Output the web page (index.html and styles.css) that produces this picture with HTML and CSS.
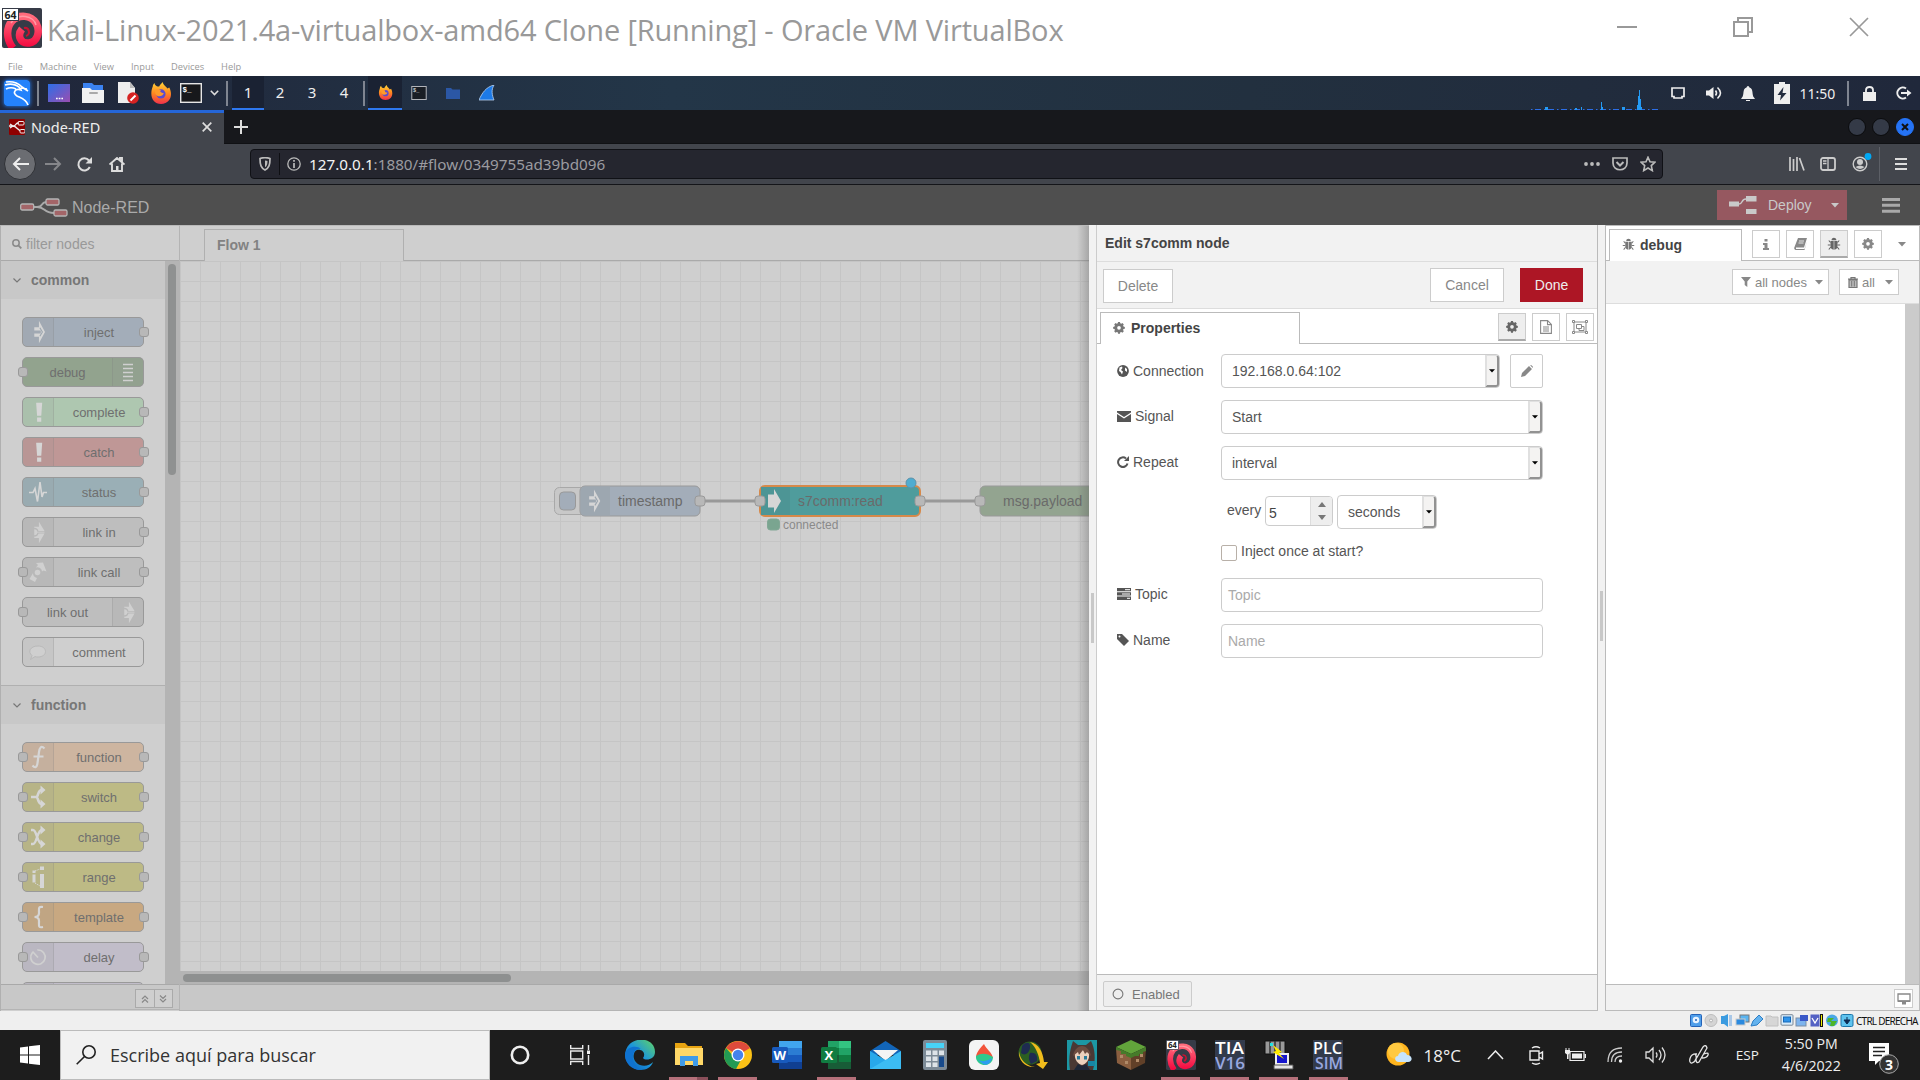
FILE: index.html
```html
<!DOCTYPE html>
<html lang="en">
<head>
<meta charset="utf-8">
<title>Kali-Linux - Oracle VM VirtualBox</title>
<link rel="stylesheet" href="styles.css">
</head>
<body>
<svg width="0" height="0" class="defs">
  <defs>
    <linearGradient id="gRed" x1="0" y1="0" x2="0" y2="1"><stop offset="0" stop-color="#ff6b7c"/><stop offset="1" stop-color="#f3063e"/></linearGradient>
    <linearGradient id="gFox" x1="0" y1="0" x2="0" y2="1"><stop offset="0" stop-color="#ffd43a"/><stop offset=".5" stop-color="#ff8a1f"/><stop offset="1" stop-color="#f0304c"/></linearGradient>
    <linearGradient id="gEdge" x1="0" y1="1" x2="1" y2="0"><stop offset="0" stop-color="#0b58b5"/><stop offset=".5" stop-color="#1a95dd"/><stop offset="1" stop-color="#63d563"/></linearGradient>
    <linearGradient id="gDesk" x1="0" y1="0" x2="1" y2="1"><stop offset="0" stop-color="#2d6fe8"/><stop offset="1" stop-color="#9a4db0"/></linearGradient>
    <symbol id="vbox" viewBox="0 0 40 40"><rect width="40" height="40" rx="2" fill="#363b47"/><path d="M11 40C4 31 4 20 10 13 17 6 29 7 34 15 39 24 35 34 27 35 18 36 15 27 20 21" fill="none" stroke="url(#gRed)" stroke-width="7.500"/><path d="M22 20C27 19 29 26 24 28" fill="none" stroke="#c8102f" stroke-width="2"/><path d="M9 15C16 4 32 8 34 17" fill="none" stroke="#ff9aa5" stroke-width="1.500"/><rect x=".5" y=".5" width="16" height="12" fill="#fff" stroke="#363b47"/><text x="2.500" y="10.500" font-size="10.500" font-weight="bold" font-family="Noto Sans, sans-serif" fill="#222">64</text></symbol>
    <symbol id="firefox" viewBox="0 0 24 24"><path d="M3 5C3 3 4 2 5 1 5 4 8 5 10 5 11 3 12 2 14 0 14 3 17 4 19 7L21 6C25 13 23 24 12 24 3 24-1 15 3 5z" fill="url(#gFox)"/><circle cx="12" cy="13" r="5" fill="#5b4bd0"/><path d="M5 9C8 7 10 8 12 9 10 10 12 12 15 12 14 16 8 17 6 13z" fill="#ff9a2a"/></symbol>
    <symbol id="term" viewBox="0 0 22 20"><rect x=".7" y=".7" width="20.600" height="18.600" fill="#17181b" stroke="#e6e6e6" stroke-width="1.400"/><text x="2.600" y="9" font-size="7.500" font-weight="bold" font-family="Liberation Mono, monospace" fill="#fff">$_</text></symbol>
    <symbol id="gear" viewBox="0 0 14 15"><path fill="currentColor" fill-rule="evenodd" d="M5.800 0h2.400l.4 1.700 1.200.5 1.500-.9 1.700 1.700-.9 1.500.5 1.200 1.700.4v2.400l-1.700.4-.5 1.200.9 1.500-1.700 1.700-1.500-.9-1.200.5-.4 1.700H5.800l-.4-1.700-1.200-.5-1.500.9L1 11.600l.9-1.500-.5-1.200L-.3 8.500V6.100l1.700-.4.5-1.200L1 3l1.700-1.700 1.500.9 1.200-.5zM7 5a2.300 2.300 0 1 0 0 4.600A2.300 2.300 0 0 0 7 5z"/></symbol>
    <symbol id="bug" viewBox="0 0 14 14"><path fill="currentColor" d="M4.500 3.200a2.500 2.500 0 0 1 5 0zM3.500 4H6.700v8.700C4.500 12.500 3.500 11 3.500 9zM7.300 4h3.200v5c0 2-1 3.500-3.200 3.700z"/><path d="M3.500 5.500L1.800 3.500M10.500 5.500l1.700-2M3.500 8H.8M10.500 8h2.700M3.800 10l-2 2.500M10.200 10l2 2.500" stroke="currentColor" stroke-width="1.100"/></symbol>
    <symbol id="inject" viewBox="0 0 20 30"><path d="M6 10h5V3l6.500 12L11 27v-7H6v-3.500h7v-3H6z" fill="#d6d6d6"/><path d="M12 10.500L14.700 15 12 19.500" fill="none" stroke="#9da7b0" stroke-width="1.200"/></symbol>
    <symbol id="link" viewBox="0 0 20 30"><path d="M6 9.500h5V4l6 10h-6.500a4.800 4.800 0 0 0-4.500-3.500zM6 21.500h5V27l6-10.500h-6.500A4.800 4.800 0 0 1 6 20z" fill="#d0d0d0"/><path d="M6 12a3.200 3.200 0 0 1 0 6.500z" fill="#d0d0d0"/><path d="M9 15.200h8" stroke="#d0d0d0"/></symbol>
    <symbol id="bang" viewBox="0 0 20 30"><path d="M8 5h6.500l-1 14H9zM9 21h4.500v4.500H9z" fill="#d6d6d6"/></symbol>
    <symbol id="caret" viewBox="0 0 8 5"><path d="M0 0h8L4 4.500z" fill="currentColor"/></symbol>
  </defs>
</svg>

<header class="titlebar">
  <div class="title-row">
    <svg class="vm-icon" width="40" height="40"><use href="#vbox"/></svg>
    <h1>Kali-Linux-2021.4a-virtualbox-amd64 Clone [Running] - Oracle VM VirtualBox</h1>
    <div class="win-buttons">
      <svg width="20" height="24" viewBox="0 0 20 24"><path d="M0 12h20" stroke="#999" stroke-width="2"/></svg>
      <svg width="20" height="20" viewBox="0 0 20 20"><path d="M1 5h14v14H1zM5 5V1h14v14h-4" fill="none" stroke="#999" stroke-width="2"/></svg>
      <svg width="20" height="20" viewBox="0 0 20 20"><path d="M1 1l18 18M19 1L1 19" stroke="#999" stroke-width="1.700"/></svg>
    </div>
  </div>
  <nav class="menu"><span>File</span><span>Machine</span><span>View</span><span>Input</span><span>Devices</span><span>Help</span></nav>
</header>

<div class="panel">
  <svg class="kali" width="26" height="26" viewBox="0 0 26 26"><rect width="26" height="26" rx="3" fill="#2482fb"/><path d="M1 5C8 3 15 5 17 10 11 8 8 13 13 16 17 18 22 19 24 25M2 2C9 1 15 4 18 7L24 11M2 9C6 7 10 8 12 9M17 8l6 1" fill="none" stroke="#fff" stroke-width="1.700"/></svg>
  <i class="bar"></i>
  <svg width="22" height="18"><rect width="22" height="18" fill="url(#gDesk)"/><path d="M8 14.500h7" stroke="#fff" stroke-width="1.600" stroke-dasharray="1.700 1"/></svg>
  <svg width="22" height="20" viewBox="0 0 22 20"><path d="M1 0h9l2 2h9v6H1z" fill="#3b82f0"/><path d="M0 5h8l2 2h12v13H0z" fill="#f1f1f1"/><rect x="7" y="9" width="9" height="2" rx="1" fill="#aaa"/></svg>
  <svg width="21" height="22" viewBox="0 0 21 22"><path d="M0 0h12l5 6v15H0z" fill="#eee"/><path d="M12 0v6h5z" fill="#bbb"/><circle cx="15" cy="16" r="5.800" fill="#d62222"/><path d="M12.500 18.500l5-5" stroke="#fff" stroke-width="2"/></svg>
  <svg width="22" height="22"><use href="#firefox"/></svg>
  <svg width="22" height="20"><use href="#term"/></svg>
  <svg width="9" height="6" viewBox="0 0 9 6"><path d="M.8.8l3.700 3.700L8.200.8" fill="none" stroke="#ddd" stroke-width="1.600"/></svg>
  <i class="bar"></i>
  <span class="ws on">1</span><span class="ws">2</span><span class="ws">3</span><span class="ws">4</span>
  <i class="bar"></i>
  <span class="ws on"><svg width="15" height="15"><use href="#firefox"/></svg></span>
  <svg width="16" height="14" opacity=".75"><use href="#term"/></svg>
  <svg width="14" height="11" viewBox="0 0 14 11"><path d="M0 0h5l1.500 1.500H14V11H0z" fill="#2b57a5"/></svg>
  <svg width="17" height="16" viewBox="0 0 17 16"><path d="M0 15C3 8 7 2 15 0 12 5 13 10 15 15z" fill="#1c7ae8" stroke="#b9d3f2" stroke-width=".8"/></svg>
  <i></i>
  <svg class="graph" width="128" height="20" viewBox="0 0 128 20"><path d="M0 19.500h128" stroke="#2c6fe8" stroke-dasharray="1.500 2.500 6 3"/><path d="M14 17h3v3h-3zM44 18h2v2h-2zM50 17h1v3h-1zM70 12h1v8h-1zM71 17h1v3h-1zM91 17h3v3h-3zM106 15h1V6h1V0h1v9h1v8h1v3h-5z" fill="#249bf5"/></svg>
  <svg width="14" height="12" viewBox="0 0 14 12"><path d="M1 1h12v8.500H11V11H3V9.500H1z" fill="none" stroke="#eee" stroke-width="1.700"/></svg>
  <svg width="16" height="14" viewBox="0 0 16 14"><path d="M0 4.500h3L7.500 1v12L3 9.500H0z" fill="#eee"/><path d="M9.500 4.500q2 2.500 0 5M11.500 1.500q6 5.500 0 11" fill="none" stroke="#eee" stroke-width="1.600"/></svg>
  <svg width="14" height="15" viewBox="0 0 14 15"><path d="M7 0C8 0 8 1 8.500 1.500 13 3 10.500 9 13 11.500L14 13H0l1-1.500C3.500 9 1 3 5.500 1.500 6 1 6 0 7 0zM5 14h4v1H5z" fill="#eee"/></svg>
  <svg width="16" height="22" viewBox="0 0 16 22"><path d="M5 0h6v2h5v20H0V2h5z" fill="#eee"/><path d="M9.500 5L3.500 13H7l-1 5.500L12.500 11H8.500z" fill="#222b3e"/></svg>
  <span class="clock">11:50</span>
  <i class="bar"></i>
  <svg class="lock" width="13" height="15" viewBox="0 0 13 15"><path d="M0 6h13v9H0z" fill="#eee"/><path d="M3 7V4q0-3 3.500-3T10 4v3" fill="none" stroke="#eee" stroke-width="1.800"/></svg>
  <svg class="logout" width="16" height="14" viewBox="0 0 16 14"><path d="M10 2.500A5.500 5.500 0 1 0 10 11.500" fill="none" stroke="#eee" stroke-width="2"/><path d="M5 6h6V3.500L15.500 7 11 10.500V8H5z" fill="#eee"/></svg>
</div>

<div class="tabs">
  <div class="tab">
    <svg width="16" height="16" viewBox="0 0 16 16"><rect width="16" height="16" rx="1" fill="#8f0000"/><path d="M0 7h4C8 7 6 4 9 4h1M4 7c4 0 4 5 10 5.500M1 5l3 2-3 2" fill="none" stroke="#eee" stroke-width="1.300"/><rect x="9" y="2.500" width="6" height="3.500" rx="1" fill="none" stroke="#eee"/><rect x="11" y="10.500" width="5" height="3.500" rx="1" fill="#8f0000" stroke="#eee"/></svg>
    <span class="tab-title">Node-RED</span>
    <svg width="10" height="10" viewBox="0 0 10 10"><path d="M.7.700l8.600 8.600M9.300.700L.7 9.300" stroke="#ddd" stroke-width="1.700"/></svg>
  </div>
  <svg class="plus" width="14" height="14" viewBox="0 0 14 14"><path d="M7 0v14M0 7h14" stroke="#ddd" stroke-width="2"/></svg>
  <div class="dots"><i></i><i></i><i class="x"><svg width="8" height="8" viewBox="0 0 8 8"><path d="M1 1l6 6M7 1L1 7" stroke="#111" stroke-width="2"/></svg></i></div>
</div>

<div class="nav">
  <span class="back"><svg width="17" height="14" viewBox="0 0 17 14"><path d="M8 1L2 7l6 6M2 7h15" fill="none" stroke="#eee" stroke-width="2"/></svg></span>
  <svg width="17" height="14" viewBox="0 0 17 14"><path d="M9 1l6 6-6 6M15 7H0" fill="none" stroke="#85868a" stroke-width="2"/></svg>
  <svg class="reload" width="16" height="15" viewBox="0 0 16 15"><path d="M12.800 10A6 6 0 1 1 12 3.500" fill="none" stroke="#ddd" stroke-width="2"/><path d="M15 0v6.500H8.500z" fill="#ddd"/></svg>
  <svg class="home" width="16" height="15" viewBox="0 0 16 15"><path d="M.5 7.500L8 1l7.500 6.500M3 6.500V14h10V6.500M11 3V.5h2V5" fill="none" stroke="#ddd" stroke-width="1.900"/><path d="M7 9h2.500v5H7z" fill="#ddd"/></svg>
  <div class="url">
    <svg width="12" height="14" viewBox="0 0 12 14"><path d="M1 1.500Q6-.2 11 1.500C11 8 10 11 6 13 2 11 1 8 1 1.500z" fill="none" stroke="#bbb" stroke-width="1.700"/><path d="M6 3.500Q8 3.500 8.500 4C8.500 7 8 9 6 10.300z" fill="#bbb"/></svg>
    <i></i>
    <svg width="14" height="14" viewBox="0 0 14 14"><circle cx="7" cy="7" r="6.200" fill="none" stroke="#bbb" stroke-width="1.300"/><path d="M7 6v5M7 3v1.700" stroke="#bbb" stroke-width="1.700"/></svg>
    <span><b>127.0.0.1</b>:1880/#flow/0349755ad39bd096</span>
    <svg width="16" height="4" viewBox="0 0 16 4"><circle cx="2" cy="2" r="1.900" fill="#bbb"/><circle cx="8" cy="2" r="1.900" fill="#bbb"/><circle cx="14" cy="2" r="1.900" fill="#bbb"/></svg>
    <svg width="16" height="14" viewBox="0 0 16 14"><path d="M1 1h14v5c0 9-14 9-14 0z" fill="none" stroke="#bbb" stroke-width="1.700"/><path d="M4.500 5L8 8.500 11.500 5" fill="none" stroke="#bbb" stroke-width="2"/></svg>
    <svg width="16" height="16" viewBox="0 0 16 16"><path d="M8 1.200l2 4.500 5 .500-3.700 3.400 1 5L8 12l-4.300 2.600 1-5L1 6.200l5-.5z" fill="none" stroke="#bbb" stroke-width="1.600"/></svg>
  </div>
  <svg width="16" height="14" viewBox="0 0 16 14"><path d="M1 0v14M4.500 2v12M8 0v14M10.500 1L15 13.500" stroke="#ccc" stroke-width="1.700"/></svg>
  <svg class="panes" width="16" height="14" viewBox="0 0 16 14"><rect x="1" y="1" width="14" height="12" rx="2" fill="none" stroke="#ccc" stroke-width="1.800"/><path d="M8 1v12M3 4h3.500M3 6.500h3.500" stroke="#ccc" stroke-width="1.300"/></svg>
  <svg class="acct" width="20" height="20" viewBox="0 0 20 20"><circle cx="8" cy="12" r="6.800" fill="none" stroke="#ccc" stroke-width="1.400"/><circle cx="8" cy="10" r="3" fill="#ccc"/><path d="M3.500 15Q8 12 12.500 15 8 19 3.500 15z" fill="#ccc"/><circle cx="16" cy="4.500" r="3.400" fill="#00a8f5"/></svg>
  <i class="nav-sep"></i>
  <svg width="12" height="12" viewBox="0 0 12 12"><path d="M0 1h12M0 6h12M0 11h12" stroke="#ddd" stroke-width="2"/></svg>
</div>

<div class="nr-header">
  <svg class="logo" width="48" height="20" viewBox="0 0 48 20"><path d="M14 9h3C24 9 20 4 27 4M17 9c9 0 6 6 17 6" fill="none" stroke="#aaa" stroke-width="1.800"/><g fill="#a36568" stroke="#b5b5b5" stroke-width="1.300"><rect x=".7" y="6" width="13" height="6" rx="1.500"/><rect x="26" y="1" width="13" height="6" rx="1.500"/><rect x="34" y="12" width="13" height="6" rx="1.500"/></g></svg>
  <span class="brand">Node-RED</span>
  <div class="deploy">
    <svg width="28" height="20" viewBox="0 0 28 20"><path d="M0 6.500h10v5H0zM17 1h10.500v5.500H17zM17 14h10.500v5H17z" fill="#c9c9c9"/><path d="M10 9C14 9 12 4 17 4" fill="none" stroke="#c9c9c9" stroke-width="1.500"/></svg>
    <span>Deploy</span>
    <svg width="8" height="5"><use href="#caret"/></svg>
  </div>
  <svg width="18" height="15" viewBox="0 0 18 15"><path d="M0 1.500h18M0 7.300h18M0 13.200h18" stroke="#a9a9a9" stroke-width="2.900"/></svg>
</div>

<main class="editor">
  <aside class="palette">
    <div class="search"><svg width="10" height="10" viewBox="0 0 10 10"><circle cx="4" cy="4" r="3.200" fill="none" stroke="#8a8a8a" stroke-width="1.500"/><path d="M6.300 6.300L9.300 9.300" stroke="#8a8a8a" stroke-width="1.800"/></svg><span>filter nodes</span></div>
    <div class="palette-body">
      <div class="palette-list">
        <h2><svg width="8" height="5" viewBox="0 0 8 5"><path d="M.5.5L4 4 7.500.5" fill="none" stroke="#777" stroke-width="1.200"/></svg><span>common</span></h2>
        <ul>
          <li class="node c-inject out"><span class="ico"><svg width="20" height="28"><use href="#inject"/></svg></span><b>inject</b></li>
          <li class="node c-debug in rev"><b>debug</b><span class="ico"><svg width="20" height="28" viewBox="0 0 20 28"><path d="M5 6.500h10M5 10.500h10M5 14.500h10M5 18.500h10M5 22.500h10" stroke="#d0d0d0" stroke-width="1.600"/></svg></span></li>
          <li class="node c-complete out"><span class="ico"><svg width="20" height="28"><use href="#bang"/></svg></span><b>complete</b></li>
          <li class="node c-catch out"><span class="ico"><svg width="20" height="28"><use href="#bang"/></svg></span><b>catch</b></li>
          <li class="node c-status out"><span class="ico"><svg width="20" height="28" viewBox="0 0 20 28"><path d="M1 14.500h4l2-4 2.500 13L12 4l2 15 1.500-4.500H19" fill="none" stroke="#d6d6d6" stroke-width="1.600"/></svg></span><b>status</b></li>
          <li class="node c-link out"><span class="ico"><svg width="20" height="28"><use href="#link"/></svg></span><b>link in</b></li>
          <li class="node c-link in out"><span class="ico"><svg width="20" height="28" viewBox="0 0 20 28"><path d="M8 5l7-.5 3.500 9-3-1-1.500 1A4.500 4.500 0 0 0 8 9.500L10 7zM5 15a5 5 0 0 0 4 5L7 24l-5.500-3z" fill="#d0d0d0"/><circle cx="9.500" cy="14.500" r="2.800" fill="#d0d0d0"/></svg></span><b>link call</b></li>
          <li class="node c-link in rev"><b>link out</b><span class="ico"><svg width="20" height="28"><use href="#link"/></svg></span></li>
          <li class="node c-comment"><span class="ico"><svg width="20" height="28" viewBox="0 0 20 28"><path d="M10 8c10 0 10 11 0 11-1 0-2 0-3-.4L2.500 21.500 4 17.500C-.5 14 2 8 10 8z" fill="#cfcfcf" stroke="#b9b9b9"/></svg></span><b>comment</b></li>
        </ul>
        <h2 class="second"><svg width="8" height="5" viewBox="0 0 8 5"><path d="M.5.5L4 4 7.500.5" fill="none" stroke="#777" stroke-width="1.200"/></svg><span>function</span></h2>
        <ul>
          <li class="node c-function in out"><span class="ico"><svg width="20" height="28" viewBox="0 0 20 28"><path d="M16.500 5.500C13 2 11.500 5 11 9L9.500 20C9 24.500 7 25.500 4.500 22.500M5.500 13.500h10" fill="none" stroke="#d6d6d6" stroke-width="2.200"/></svg></span><b>function</b></li>
          <li class="node c-switch in out"><span class="ico"><svg width="20" height="28" viewBox="0 0 20 28"><path d="M3 14h5C11 14 9 7 14 7M8 14c3 0 1 7 6 7" fill="none" stroke="#d6d6d6" stroke-width="2.600"/><path d="M12.500 2.500L17.500 7l-5 4.500zM12.500 16.500L17.500 21l-5 4.500z" fill="#d6d6d6"/></svg></span><b>switch</b></li>
          <li class="node c-switch in out"><span class="ico"><svg width="20" height="28" viewBox="0 0 20 28"><path d="M3 7h2C9 7 9 21 14 21M3 21h2C9 21 9 7 14 7" fill="none" stroke="#d6d6d6" stroke-width="2.400"/><path d="M12.500 2.500L17.500 7l-5 4.500zM12.500 16.500L17.500 21l-5 4.500z" fill="#d6d6d6"/></svg></span><b>change</b></li>
          <li class="node c-switch in out"><span class="ico"><svg width="20" height="28" viewBox="0 0 20 28"><path d="M4.500 7.500h3v2.500h-3zM4.500 11.500h3v8h-3zM12 3.500h4V7h-4zM12 11h4v14h-4z" fill="#d6d6d6"/><path d="M7 8l5-2M7 20l5 3" stroke="#d6d6d6" stroke-dasharray="1.500 1"/></svg></span><b>range</b></li>
          <li class="node c-template in out"><span class="ico"><svg width="20" height="28" viewBox="0 0 20 28"><path d="M15 4C10 3.500 11 5 11 10 11 13 9.500 14 6.500 14 9.500 14 11 15 11 18 11 23 10 25 15 24" fill="none" stroke="#d6d6d6" stroke-width="2.200"/></svg></span><b>template</b></li>
          <li class="node c-delay in out"><span class="ico"><svg width="20" height="28" viewBox="0 0 20 28"><path d="M10 7.500V7a7.200 7.200 0 1 1-5.500 2.500M4.500 8.500L10 14.500" fill="none" stroke="#d0d0d0" stroke-width="1.700"/></svg></span><b>delay</b></li>
          <li class="node c-delay in out"><span class="ico"></span><b></b></li>
        </ul>
      </div>
      <div class="vscroll"><i></i></div>
    </div>
    <footer><div class="pair"><span><svg width="8" height="8" viewBox="0 0 8 8"><path d="M1 4l3-3 3 3M1 7.500l3-3 3 3" fill="none" stroke="#888" stroke-width="1.200"/></svg></span><span><svg width="8" height="8" viewBox="0 0 8 8"><path d="M1 .5l3 3 3-3M1 4l3 3 3-3" fill="none" stroke="#888" stroke-width="1.200"/></svg></span></div></footer>
  </aside>

  <section class="workspace">
    <div class="ws-tabs"><div class="flow-tab">Flow 1</div></div>
    <svg class="canvas" width="909" height="710" viewBox="180 261 909 710">
      <defs><pattern id="grid" x="180" y="261" width="20" height="20" patternUnits="userSpaceOnUse"><path d="M.5 0v20M0 .5h20" stroke="#c5c5c5"/></pattern></defs>
      <rect x="180" y="261" width="909" height="710" fill="url(#grid)"/>
      <g stroke="#999" stroke-width="3"><path d="M700 501h60M920 501h60"/></g>
      <g stroke="#a8a8a8"><rect x="554.500" y="487.500" width="40" height="27" rx="5" fill="#c8c8c8"/><rect x="559.500" y="492" width="16" height="18" rx="4" fill="#a3adb9" stroke="#999"/></g>
      <rect x="580" y="486" width="120" height="30" rx="5" fill="#a3adb9" stroke="#999"/>
      <path d="M580.500 491q0-4.500 4.500-4.500H610v29h-25Q580.500 515.500 580.500 511z" fill="#9da7b0"/>
      <use href="#inject" x="583" y="486.500" width="20" height="29"/>
      <rect x="760" y="486" width="160" height="30" rx="5" fill="#4f9c9c" stroke="#d6894a" stroke-width="2"/>
      <path d="M761 487h29v28h-29z" fill="#4d9595"/>
      <path d="M768 494.500h6V489l7 12-7 12v-5.500h-6z" fill="#d6d6d6"/>
      <rect x="980" y="486" width="130" height="30" rx="5" fill="#93a490" stroke="#999"/>
      <g fill="#b8b8b8" stroke="#999"><rect x="695" y="496" width="10" height="10" rx="3"/><rect x="755" y="496" width="10" height="10" rx="3"/><rect x="915" y="496" width="10" height="10" rx="3"/><rect x="975" y="496" width="10" height="10" rx="3"/></g>
      <circle cx="911" cy="483" r="5" fill="#4facd0" stroke="#5f92a8"/>
      <rect x="767.500" y="519" width="12" height="11" rx="3" fill="#7aa590" stroke="#82a896"/>
      <g class="labels"><text x="618" y="505.500">timestamp</text><text x="798" y="505.500">s7comm:read</text><text x="1003" y="505.500">msg.payload</text><text class="small" x="783" y="529">connected</text></g>
    </svg>
    <div class="hscroll"><i></i></div>
    <div class="ws-foot"></div>
  </section>

  <section class="tray">
    <div class="grip"><i></i></div>
    <div class="tray-main">
      <h3>Edit s7comm node</h3>
      <div class="tray-tools"><button class="del">Delete</button><button class="cancel">Cancel</button><button class="done">Done</button></div>
      <div class="tray-tabs">
        <div class="prop-tab"><svg width="12" height="12"><use href="#gear"/></svg><span>Properties</span></div>
        <span class="sq on"><svg width="12" height="12"><use href="#gear"/></svg></span>
        <span class="sq"><svg width="12" height="14" viewBox="0 0 12 14"><path d="M.6.6h7l3.800 3.800v9H.600zM7.500.6v4h4M3 7h6M3 9h6M3 11h6" fill="none" stroke="#888" stroke-width="1.100"/></svg></span>
        <span class="sq"><svg width="16" height="14" viewBox="0 0 16 14"><path d="M2 2h12v10H2zM4.500 4.500h5v4h-5zM9.500 6.500H12v4H7V8.500" fill="none" stroke="#888"/><path d="M.5.5h2v2h-2zM13.500.5h2v2h-2zM.5 11.500h2v2h-2zM13.500 11.500h2v2h-2z" fill="#fff" stroke="#888"/></svg></span>
      </div>
      <form class="form">
        <div class="row"><label class="low"><svg width="12" height="12" viewBox="0 0 12 12"><circle cx="6" cy="6" r="5.900" fill="#555"/><path d="M2.500 2.500L5 1.500l.5 1.500-1.500 2 2 1.500-1 3-1.500-2.500L2 6zM8 2.500l2 1.500v3L8 5.500z" fill="#fff"/></svg><span>Connection</span></label><div class="select w279">192.168.0.64:102<i><svg width="6" height="4"><use href="#caret"/></svg></i></div><span class="edit"><svg width="12" height="12" viewBox="0 0 12 12"><path d="M0 12l1-4L8 1l3 3-7 7zM9 .3h1.500l1.300 1.300V3z" fill="#888"/></svg></span></div>
        <div class="row"><label><svg width="14" height="11" viewBox="0 0 14 11"><path d="M0 0h14v1.500L7 6 0 1.500zM0 3l7 4.500L14 3v8H0z" fill="#555"/></svg><span>Signal</span></label><div class="select w322">Start<i><svg width="6" height="4"><use href="#caret"/></svg></i></div></div>
        <div class="row"><label><svg width="12" height="12" viewBox="0 0 12 12"><path d="M10.500 7.500A4.800 4.800 0 1 1 9 2.500" fill="none" stroke="#555" stroke-width="2"/><path d="M12 0v5H7z" fill="#555"/></svg><span>Repeat</span></label><div class="select w322">interval<i><svg width="6" height="4"><use href="#caret"/></svg></i></div></div>
        <div class="row every"><span>every</span><div class="spin"><span>5</span><i><svg width="8" height="5" viewBox="0 0 8 5"><path d="M0 5h8L4 0z" fill="#777"/></svg><svg width="8" height="5" viewBox="0 0 8 5"><path d="M0 0h8L4 5z" fill="#777"/></svg></i></div><div class="select w100">seconds<i><svg width="6" height="4"><use href="#caret"/></svg></i></div></div>
        <div class="row once"><span class="check"></span><span>Inject once at start?</span></div>
        <div class="row"><label><svg width="14" height="12" viewBox="0 0 14 12"><path d="M0 0h14v3.300H0zM0 4.300h14v3.300H0zM0 8.600h14V12H0z" fill="#555"/><path d="M8 1.700h5M5 6h8M10 10.300h3" stroke="#fff"/></svg><span>Topic</span></label><div class="text">Topic</div></div>
        <div class="row"><label><svg width="12" height="12" viewBox="0 0 12 12"><path d="M0 0h5l7 7-5 5-7-7z" fill="#555"/><circle cx="2.500" cy="2.500" r="1" fill="#fff"/></svg><span>Name</span></label><div class="text">Name</div></div>
      </form>
      <footer><span class="enabled"><svg width="12" height="12" viewBox="0 0 12 12"><circle cx="6" cy="6" r="4.900" fill="none" stroke="#777" stroke-width="1.100"/></svg><span>Enabled</span></span></footer>
    </div>
  </section>

  <div class="sep"><i></i></div>

  <aside class="sidebar">
    <div class="side-tabs">
      <div class="debug-tab"><svg width="13" height="13"><use href="#bug"/></svg><span>debug</span></div>
      <span class="sq"><svg width="6" height="11" viewBox="0 0 6 11"><path d="M1.500 0h3v2.500h-3zM0 4h4.500v5H6v2H0V9h1.500V6H0z" fill="#888"/></svg></span>
      <span class="sq"><svg width="13" height="12" viewBox="0 0 13 12"><path d="M4 0h9l-3 9.500H2V11h8.500l2.500-8-2.500 9H1.500Q-.5 11 .5 9z" fill="#888"/><path d="M5 3h5M4.500 5h5" stroke="#fff" stroke-width=".8"/></svg></span>
      <span class="sq on"><svg width="14" height="14"><use href="#bug"/></svg></span>
      <span class="sq"><svg width="12" height="12"><use href="#gear"/></svg></span>
      <svg class="more" width="8" height="5"><use href="#caret"/></svg>
    </div>
    <div class="side-tools">
      <span class="btn all-nodes"><svg width="10" height="10" viewBox="0 0 10 10"><path d="M0 0h10L6.300 4.500V10L3.700 8V4.500z" fill="#888"/></svg><span>all nodes</span><svg width="8" height="5"><use href="#caret"/></svg></span>
      <span class="btn"><svg width="10" height="11" viewBox="0 0 10 11"><path d="M3 1.500V.5h4v1M0 2h10M1 3h8v7.500H1z" fill="#bbb" stroke="#777" stroke-width="1.200"/><path d="M3.700 4v5.500M6.300 4v5.500" stroke="#777"/></svg><span>all</span><svg width="8" height="5"><use href="#caret"/></svg></span>
    </div>
    <div class="side-body"></div>
    <footer><span><svg width="14" height="12" viewBox="0 0 14 12"><path d="M1 1h12v7H1z" fill="none" stroke="#888" stroke-width="1.300"/><path d="M1 7.500h12V9H1zM5 9h4v2.500H5z" fill="#888"/></svg></span></footer>
  </aside>
</main>

<div class="vbstatus">
  <svg width="164" height="13" viewBox="0 0 164 13">
    <rect x=".5" y=".5" width="11" height="12" rx="1" fill="#4f9eea" stroke="#2463b8"/><circle cx="6" cy="6" r="3.300" fill="#e8f3ff"/><circle cx="6" cy="6" r="1" fill="#2463b8"/>
    <circle cx="21" cy="6.500" r="6" fill="#d4d4d4" stroke="#bcbcbc"/><circle cx="21" cy="6.500" r="1.500" fill="#f5f5f5" stroke="#b0b0b0"/>
    <path d="M31 2h3l4-2v13l-4-3h-3z" fill="#3b9be0"/><path d="M39 1h3v11h-3z" fill="#a9c8e8"/>
    <rect x="50" y="1" width="9" height="7" fill="#5ab4f0" stroke="#777"/><rect x="46" y="5" width="9" height="6" fill="#2a8ae0" stroke="#ccc"/>
    <path d="M61 12l2-5 6-6 4 4-6 6z" fill="#63b2ee" stroke="#2f7fc4"/>
    <path d="M76 2h5l1 1h6v9H76z" fill="#d6d6d6" stroke="#c0c0c0"/>
    <rect x="91" y=".7" width="12" height="10.500" rx="1" fill="#d8ecfb" stroke="#7b8794"/><rect x="93.500" y="3" width="7" height="5" fill="#2f94ea" stroke="#1668b8"/>
    <rect x="106" y="4" width="10" height="8" fill="#7db4ee" stroke="#7a8ea5"/><rect x="110" y="1" width="8" height="6" fill="#3a58c8"/>
    <rect x="120.500" y=".5" width="9" height="12" fill="#5361c4"/><path d="M122 4l3 5 3-5" stroke="#fff" stroke-width="1.300" fill="none"/><rect x="130.500" y=".5" width="2" height="12" fill="#ee0" stroke="#111"/>
    <circle cx="142" cy="6.500" r="6" fill="#4aa7e6"/><path d="M138 4h6l-3 3h6l-3 5h-4l1-4h-4z" fill="#4cb52a"/>
    <rect x="151" y=".5" width="12" height="12" rx="1.500" fill="#5fc3ee" stroke="#1b75aa"/><path d="M157 3v5M154 6l3 4 3-4z" fill="#0d2b52" stroke="#0d2b52"/>
  </svg>
  <span>CTRL DERECHA</span>
</div>

<div class="taskbar">
  <span><svg width="20" height="20" viewBox="0 0 20 20"><path d="M0 2.500L8 1.500V9.500H0zM9 1.300L20 0v9.500H9zM0 10.500h8v8L0 17.500zM9 10.500h11V20L9 18.700z" fill="#fff"/></svg></span>
  <div class="find"><svg width="20" height="20" viewBox="0 0 20 20"><circle cx="13" cy="7" r="6.200" fill="none" stroke="#222" stroke-width="1.600"/><path d="M8.500 11.500L.7 19.300" stroke="#222" stroke-width="1.600"/></svg><span>Escribe aquí para buscar</span></div>
  <span><svg width="20" height="20"><circle cx="10" cy="10" r="8.200" fill="none" stroke="#eee" stroke-width="2.600"/></svg></span>
  <span><svg width="20" height="20" viewBox="0 0 20 20"><path d="M.7 0v3.500h12V0M.7 6h12v8H.7zM.7 20v-3.500h12V20M18.500 0v5M18.500 10v10" fill="none" stroke="#e8e8e8" stroke-width="1.400"/><path d="M17 5.500h3v3.500h-3z" fill="#eee"/></svg></span>
  <div class="apps">
    <span><svg width="30" height="30" viewBox="0 0 30 30"><path d="M0 15C1-5 30-5 30 12 30 20 20 21 18 18 21 14 18 9 12 10 8 11 6 21 15 25 20 27 25 25 28 22 25 31 13 32 7 27 2 23 0 20 0 15z" fill="url(#gEdge)"/><path d="M0 14C2 6 12 5 16 9 11 8 7 13 8 20 9 25 14 29 16 30 6 30 0 23 0 14z" fill="#0f72d0"/></svg></span>
    <span class="run multi"><svg width="28" height="24" viewBox="0 0 28 24"><path d="M0 0h10l3 3h14v8H0z" fill="#e8a411"/><path d="M0 5h28v17H0z" fill="#ffd868"/><path d="M5 23V13h18v10h-5v-5h-8v5z" fill="#3f9be8"/></svg></span>
    <span class="run"><svg width="28" height="28" viewBox="0 0 28 28"><circle cx="14" cy="14" r="14" fill="#fbc116"/><path d="M14 14L2 7A14 14 0 0 1 26 7z" fill="#dd4b3c"/><path d="M2 7A14 14 0 0 0 12 28l6-11-8-1z" fill="#229a54"/><circle cx="14" cy="14" r="6.500" fill="#fff"/><circle cx="14" cy="14" r="5.200" fill="#4583ec"/></svg></span>
    <span><svg width="30" height="28" viewBox="0 0 30 28"><path d="M7 0h23v7H7z" fill="#41a5ee"/><path d="M7 7h23v7H7z" fill="#2b7cd3"/><path d="M7 14h23v7H7z" fill="#185abd"/><path d="M7 21h23v7H7z" fill="#103f91"/><rect y="6" width="16" height="16" rx="1.500" fill="#185abd"/><text x="1.500" y="18.500" class="ofc">W</text></svg></span>
    <span class="run"><svg width="30" height="28" viewBox="0 0 30 28"><path d="M7 0h23v28H7z" fill="#21a366"/><path d="M18 0h12v7H18z" fill="#33c481"/><path d="M7 7h11v7H7z" fill="#107c41"/><path d="M7 14h23v14H7z" fill="#185c37"/><path d="M18 14h12v7H18z" fill="#107c41"/><rect y="6" width="16" height="16" rx="1.500" fill="#107c41"/><text x="3.500" y="18.500" class="ofc">X</text></svg></span>
    <span><svg width="31" height="28" viewBox="0 0 31 28"><path d="M0 10L15.500 0 31 10v4H0z" fill="#1265b8"/><path d="M3 9h25L15.500 20z" fill="#f4f4f4"/><path d="M0 10l31 18H0z" fill="#28a8ea"/><path d="M31 10v18H0z" fill="#3cbcf3"/></svg></span>
    <span><svg width="24" height="30" viewBox="0 0 24 30"><rect width="24" height="30" rx="2" fill="#7c8a96"/><path d="M3 3h18v5H3z" fill="#47d2f7"/><path d="M3 10.500h5V15H3zM9.500 10.500h5V15h-5zM16 10.500h5V15h-5zM3 16.500h5V21H3zM9.500 16.500h5V21h-5zM3 22.500h5V27H3zM9.500 22.500h5V27h-5z" fill="#dde3e8"/><path d="M16 16.500h5V27h-5z" fill="#174a8c"/></svg></span>
    <span><svg width="30" height="30" viewBox="0 0 30 30"><rect width="30" height="30" rx="6" fill="#f4f4f4"/><path d="M15 4C8 11 7 15 7 18h17C23 12 17 9 15 4z" fill="#f2543b"/><path d="M7 16q8-5 17 1c0 10-15 11-17 1z" fill="#2ec98c"/><path d="M9 20q7 3 14-2-3 9-9 6z" fill="#2d9df0"/></svg></span>
    <span><svg width="30" height="29" viewBox="0 0 30 29"><circle cx="12" cy="12" r="11.500" fill="#2b5f22"/><path d="M4 5c4-5 9-4 8 2s-6 8-9 5zM12 12c5-1 8 2 7 8l-6 3c-2-3-3-7-1-11z" fill="#1e2b50"/><path d="M12 1c9 2 13 10 14 20h4l-5 7-7-5 4-1C21 14 18 6 12 1zM1 10c1 9 7 15 16 16C7 27 0 19 1 10z" fill="#f0bc1c"/></svg></span>
    <span><svg width="30" height="30" viewBox="0 0 30 30"><rect width="30" height="30" fill="#1c97a4"/><path d="M3 30C1 16 4 7 6 1l5 4h8l5-4c4 8 5 18 2 29z" fill="#4b3834"/><path d="M8 13q7-6 14 0c1 7-3 11-7 12-4-1-8-5-7-12z" fill="#ecd0bd"/><path d="M6 16c1-7 6-10 9-10s8 3 9 10l-4-4-2 2-2-4-4 5-1-3z" fill="#6d4c40"/><path d="M10 16h3v3.500h-3zM17 16h3v3.500h-3z" fill="#287b9a"/><path d="M7 30l4-6 4 2 4-2 4 6z" fill="#1e2638"/><path d="M21 21h7v5h-7z" fill="#1686a5"/></svg></span>
    <span><svg width="30" height="30" viewBox="0 0 30 30"><path d="M0 8l15 7v15L1 23z" fill="#8b5f40"/><path d="M30 8l-15 7v15l14-7z" fill="#614028"/><path d="M15 0l15 7-15 7L0 7z" fill="#62a43b"/><path d="M0 7l15 7 15-7v4l-3 1v2h-4v2h-4l-4 2-5-2v-2H5v-3l-5-1z" fill="#467b2a"/><path d="M4 15h3v3H4zM9 21h3v3H9zM20 19h3v3h-3zM24 14h3v3h-3z" fill="#b08a68"/></svg></span>
    <span class="run"><svg width="30" height="30"><use href="#vbox"/></svg></span>
    <span class="run"><svg width="30" height="30" viewBox="0 0 30 30"><rect width="30" height="30" fill="#333b4c"/><text x="0" y="14" textLength="29" lengthAdjust="spacingAndGlyphs" class="tia">TIA</text><text x="0" y="29" textLength="30" lengthAdjust="spacingAndGlyphs" class="tia blue">V16</text></svg></span>
    <span class="run"><svg width="30" height="30" viewBox="0 0 30 30"><path d="M1 1h20v13H1z" fill="#999" stroke="#111"/><path d="M6 1v13M11 1v13M16 1v13" stroke="#333" stroke-width="1.500"/><path d="M6 3h3v3H6z" fill="#25e0e0"/><path d="M12 14h12v10H12z" fill="#1616cc" stroke="#eee" stroke-width="2"/><path d="M10 25h19v4H10z" fill="#e6e6e6" stroke="#555"/><path d="M9 5l9 7-3 1 5 6-11-7 3-1z" fill="#ffea00"/></svg></span>
    <span class="run"><svg width="30" height="30" viewBox="0 0 30 30"><rect width="30" height="30" fill="#333b4c"/><text x="0" y="14" textLength="29" lengthAdjust="spacingAndGlyphs" class="tia">PLC</text><text x="2" y="29" textLength="28" lengthAdjust="spacingAndGlyphs" class="tia blue">SIM</text></svg></span>
  </div>
  <div class="trayicons">
    <svg width="26" height="26" viewBox="0 0 26 26"><circle cx="12" cy="12" r="11.500" fill="#ffb51f"/><circle cx="10" cy="9" r="8" fill="#ffc940"/><path d="M13 20c-5 0-5-6-1-6 1-5 8-5 9-1 6 0 6 7 1 7z" fill="#c7e4fb"/></svg>
    <span class="temp">18°C</span>
    <svg width="17" height="10" viewBox="0 0 17 10"><path d="M1 9l7.500-8L16 9" fill="none" stroke="#eee" stroke-width="1.500"/></svg>
    <svg width="16" height="19" viewBox="0 0 16 19"><path d="M2 5h9v9H2zM11 8l3.500-2v7L11 11M4 2q4-2.500 8 0M4 17q4 2.500 8 0" fill="none" stroke="#eee" stroke-width="1.400"/></svg>
    <svg width="21" height="14" viewBox="0 0 21 14"><path d="M5 3.500h14v9H5z" fill="none" stroke="#eee" stroke-width="1.200"/><path d="M7 5.500h10v5H7zM19.500 6h1.500v4h-1.500zM0 2h5v3L3.500 6.500V11H2V6.500L0 5z" fill="#eee"/><path d="M1 0v2M4 0v2" stroke="#eee"/></svg>
    <svg width="16" height="16" viewBox="0 0 16 16"><path d="M1 15Q1 1 15 1M4.500 15Q4.500 5 15 5M8 15Q8 9 15 9" fill="none" stroke="#ccc" stroke-width="1.300"/><circle cx="13.500" cy="14" r="1.700" fill="#eee"/></svg>
    <svg width="21" height="18" viewBox="0 0 21 18"><path d="M1 6h3l4-4v14l-4-4H1zM11 6.500q2 2.500 0 5M14 4q4 5 0 10M17 1.500q6 7.500 0 15" fill="none" stroke="#ddd" stroke-width="1.300"/></svg>
    <svg width="21" height="20" viewBox="0 0 21 20"><path d="M7 14L14 2q3-3 4 1L10 17q-3 2-3-3M8 9C0 8-1 19 3 18c5-2 5-7 3-9M15 9q5-2 4 1t-6 3" fill="none" stroke="#e5e5e5" stroke-width="1.300"/></svg>
    <span class="esp">ESP</span>
    <div class="time"><span>5:50 PM</span><span>4/6/2022</span></div>
    <svg class="notif" width="30" height="32" viewBox="0 0 30 32"><path d="M0 0h20v18H10l-4 4v-4H0z" fill="#fff"/><path d="M4 4.500h12M4 8.500h12M4 12.500h9" stroke="#222" stroke-width="1.300"/><circle cx="20" cy="21" r="9.300" fill="#333" stroke="#aaa"/><text x="16" y="26.500" font-size="14" font-weight="bold" font-family="Noto Sans, sans-serif" fill="#fff">3</text></svg>
  </div>
</div>
</body>
</html>
```
FILE: styles.css
```css
*, *::before, *::after { box-sizing: border-box; }
body { margin: 0; width: 1920px; height: 1080px; overflow: hidden; background: #efefef; font: 14px "Liberation Sans", Arial, sans-serif; color: #555; }
svg { display: block; flex: none; }
.defs { position: absolute; }
h1, h2, h3, ul { margin: 0; padding: 0; font-weight: normal; white-space: nowrap; }
i, em { font-style: normal; }

/* host window */
.titlebar { height: 76px; background: #fff; font-family: "Open Sans", "Noto Sans", sans-serif; color: #999; }
.title-row { display: flex; height: 56px; padding: 0 51px 0 2px; align-items: center; }
.title-row h1 { margin: 2px 0 0 5px; font-size: 29px; letter-spacing: -.165px; }
.win-buttons { display: flex; align-items: center; gap: 96px; margin: -2px 0 0 auto; }
.menu { display: flex; padding-left: 8px; gap: 17px; font-size: 9.300px; line-height: 22px; }

/* guest panel */
.panel { display: grid; height: 34px; align-items: center; justify-items: center; color: #eee; font: 15px "Noto Sans", sans-serif;
  background: linear-gradient(90deg, #20263a, #233648 35%, #22303f 65%, #20283b);
  grid-template-columns: 33px 10px 32px 36px 34px 31px 30px 16px 10px 32px 32px 32px 32px 8px 34px 34px 34px 34px 1fr 128px 38px 34px 34px 34px 37px 24px 17px 43px; }
.kali { box-shadow: 0 0 4px #2482fb; border-radius: 3px; }
.bar { width: 2px; height: 25px; background: #7f8591; }
.ws { width: 100%; height: 34px; display: flex; align-items: center; justify-content: center; border-bottom: 2px solid transparent; }
.ws.on { background: #1a2233; border-bottom-color: #2e78f0; }
.graph { align-self: end; }
.clock { font-size: 14px; }
.lock { margin-left: 1px; }
.logout { justify-self: start; margin-left: 19px; }

/* browser */
.tabs { display: flex; height: 34px; background: #17181c; font-family: "Noto Sans", sans-serif; color: #eee; align-items: center; border-bottom: 1px solid #101114; }
.tab { display: flex; align-items: center; width: 224px; height: 34px; padding: 0 12px 3px 9px; background: #42454c; border-top: 3px solid #2566d8; margin-bottom: -1px; }
.tab-title { margin-left: 6px; font-size: 14.500px; }
.tab svg:last-child { margin-left: auto; }
.plus { margin-left: 10px; }
.dots { display: flex; gap: 6px; margin-left: auto; padding-right: 6px; }
.dots i { width: 18px; height: 18px; border-radius: 50%; background: #343a47; border: 1px solid #0a0b0d; display: flex; align-items: center; justify-content: center; }
.dots .x { background: #2573f5; border-color: #2573f5; }
.nav { display: flex; height: 41px; align-items: center; background: #42454c; border-bottom: 1px solid #141519; }
.back { display: flex; align-items: center; justify-content: center; width: 32px; height: 32px; margin: 0 9px 0 4px; border-radius: 50%; background: #6b6d72; border: 1px solid #2f3136; }
.reload { margin-left: 15px; }
.home { margin-left: 16px; }
.url { display: flex; align-items: center; width: 1413px; height: 30px; margin: 0 126px 0 125px; padding: 0 6px 0 8px; background: #25262f; border: 1px solid #101116; border-radius: 4px; font: 15.250px "Noto Sans", sans-serif; color: #9b9ba0; }
.url b { color: #f4f4f4; font-weight: normal; }
.url i { width: 1px; height: 22px; background: #0e0f13; margin: 0 7px 0 8px; }
.url span { margin: 0 auto 0 8px; }
.url svg:nth-last-child(-n+2) { margin-left: 12px; }
.panes { margin-left: 15px; }
.acct { margin: -4px 7px 0 16px; }
.nav-sep { width: 1px; height: 34px; margin-right: 15px; background: #5c5f66; }

/* editor header */
.nr-header { display: flex; align-items: center; height: 40px; padding: 0 20px; background: #4f4f4f; }
.logo { margin-top: 6px; }
.brand { margin: 5px auto 0 4px; font-size: 16px; color: #aaa; }
.deploy { display: flex; align-items: center; width: 130px; height: 30px; padding: 0 8px 0 12px; background: #965860; color: #c9c9c9; margin-right: 35px; }
.deploy span { margin: 0 auto 0 11px; }

.editor { display: flex; height: 786px; }
.editor footer { height: 26px; border-top: 1px solid #bbb; border-bottom: 1px solid #bbb; background: #f2f2f2; }
.palette, .workspace { display: flex; flex-direction: column; border-top: 1px solid #bababa; background: #cfcfcf; }
.palette { width: 180px; border-left: 1px solid #b0b0b0; border-right: 1px solid #b4b4b4; }
.palette footer { background: #c8c8c8; border-color: #a9a9a9 #c8c8c8 #b4b4b4; }
.search { display: flex; align-items: center; height: 35px; padding: 2px 0 0 11px; gap: 4px; border-bottom: 1px solid #a9a9a9; color: #999; }
.palette-body { display: flex; height: 723px; }
.palette-list { width: 164px; overflow: hidden; }
.palette h2 { display: flex; align-items: center; height: 38px; padding-left: 12px; gap: 10px; font-size: 14px; font-weight: bold; background: #c8c8c8; color: #777; }
.palette h2.second { height: 39px; border-top: 1px solid #b0b0b0; }
.palette ul { list-style: none; display: grid; gap: 10px; padding: 18px 0 18px 21px; }
.node { position: relative; display: flex; width: 122px; height: 30px; border: 1px solid #999; border-radius: 5px; font-size: 13px; color: #6f6f6f; }
.node b { flex: 1; text-align: center; line-height: 29px; font-weight: normal; }
.node .ico + b { padding-left: 1px; }
.ico { display: flex; align-items: center; justify-content: center; width: 31px; background: rgba(150, 150, 150, .14); border-right: 1px solid rgba(120, 120, 120, .2); }
.rev .ico { border-right: 0; border-left: 1px solid rgba(120, 120, 120, .2); }
.in::before, .out::after { content: ""; position: absolute; top: 9px; width: 10px; height: 10px; border: 1px solid #999; border-radius: 3px; background: #b8b8b8; }
.in::before { left: -5px; }
.out::after { right: -6px; }
.c-inject { background: #a3adb9; }
.c-debug { background: #92a38e; }
.c-complete { background: #aec7b0; }
.c-catch { background: #bf9796; }
.c-status { background: #9aafb6; }
.c-link { background: #bebebe; }
.c-function { background: #cdb5a0; }
.c-switch { background: #bdba85; }
.c-template { background: #c8a881; }
.c-delay { background: #c1bdc9; }
.vscroll { width: 14px; padding: 3px 3px 0; background: #b4b4b4; }
.vscroll i { display: block; width: 8px; height: 211px; border-radius: 4px; background: #8f9191; }
.pair { display: flex; width: 38px; height: 19px; margin: 4px 0 0 134px; border: 1px solid #aaa; }
.pair span { flex: 1; display: flex; align-items: center; justify-content: center; background: #cfcfcf; }
.pair span + span { border-left: 1px solid #aaa; }

.workspace { width: 909px; position: relative; }
.workspace::after { content: ""; position: absolute; top: 0; right: 0; bottom: 0; width: 12px; background: linear-gradient(90deg, transparent, rgba(90, 90, 90, .35)); }
.ws-tabs { height: 35px; padding: 3px 0 0 24px; border-bottom: 1px solid #aaa; }
.flow-tab { width: 200px; height: 32px; padding-left: 12px; line-height: 30px; font-weight: bold; color: #828282; border: 1px solid #b0b0b0; border-bottom: 0; background: #cfcfcf; }
.labels { font-size: 14px; fill: #6a6a6a; }
.labels .small { font-size: 12px; fill: #8a8a8a; }
.hscroll { height: 13px; padding: 3px; background: #b4b4b4; }
.hscroll i { display: block; width: 328px; height: 8px; border-radius: 4px; background: #8e9090; }
.ws-foot { flex: 1; border-top: 1px solid #a9a9a9; border-bottom: 1px solid #b4b4b4; background: #c8c8c8; }

/* edit tray */
.tray { display: flex; width: 509px; background: #f2f2f2; border-bottom: 1px solid #bbb; }
.grip, .sep { display: flex; align-items: center; width: 7px; }
.grip i, .sep i { width: 3px; height: 50px; margin-left: 2px; background: #c8c8c8; }
.sep i { margin-top: -4px; }
.tray-main { display: flex; flex-direction: column; width: 502px; border-left: 1px solid #ccc; border-right: 1px solid #bbb; background: #fff; }
.tray h3 { height: 37px; padding-left: 8px; line-height: 37px; font-size: 14px; font-weight: bold; color: #444; background: #f2f2f2; border-bottom: 1px solid #ddd; }
.tray-tools { display: flex; align-items: center; height: 47px; padding: 0 14px 0 6px; background: #f2f2f2; border-bottom: 1px solid #ddd; }
button { height: 34px; padding: 0; font: inherit; color: #888; background: #fff; border: 1px solid #ccc; }
.del { width: 70px; margin: 2px auto 0 0; }
.cancel { width: 74px; margin-right: 16px; }
.done { width: 63px; background: #ad1625; border: 0; color: #eee; }
.tray-tabs { display: flex; height: 35px; border-bottom: 1px solid #bbb; padding: 3px 3px 0; }
.prop-tab { display: flex; align-items: center; gap: 6px; width: 200px; height: 32px; margin-right: auto; padding: 0 0 2px 12px; font-weight: bold; color: #777; background: #fff; border: 1px solid #bbb; border-bottom: 0; }
.prop-tab span, .debug-tab span { color: #444; }
.sq { display: flex; align-items: center; justify-content: center; width: 28px; height: 28px; margin: 1px 0 0 6px; border: 1px solid #ccc; background: #fff; color: #888; }
.sq.on { background: #eee; border-bottom: 2px solid #aaa; color: #666; }
.form { flex: 1; padding: 10px 0 0 20px; }
.row { display: flex; height: 34px; margin-bottom: 12px; }
.row label { display: flex; align-items: center; gap: 4px; width: 104px; height: 32px; }
.row .low { height: 34px; }
.select { display: flex; height: 34px; padding-left: 10px; line-height: 32px; border: 1px solid #ccc; border-radius: 4px; }
.select i { display: flex; align-items: center; justify-content: center; width: 14px; height: 32px; margin-left: auto; background: #f4f3f2; border: solid; border-width: 1px 2px 2px; border-color: #e0e0e0 #929292 #929292 #e0e0e0; border-radius: 0 3px 3px 0; color: #000; }
.w279 { width: 279px; } .w322 { width: 322px; } .w100 { width: 100px; }
.edit { display: flex; align-items: center; justify-content: center; width: 33px; height: 34px; margin-left: 10px; border: 1px solid #ccc; border-radius: 2px; }
.every { padding-left: 110px; margin: 15px 0 16px; }
.every > span { line-height: 30px; width: 38px; }
.spin { display: flex; width: 68px; height: 30px; margin: 1px 4px 0 0; border: 1px solid #ccc; border-radius: 4px; overflow: hidden; color: #444; line-height: 32px; }
.spin span { flex: 1; padding-left: 3px; }
.spin i { display: flex; flex-direction: column; align-items: center; justify-content: space-between; width: 22px; padding: 5px 0; background: #eee; border-left: 1px solid #ddd; }
.once { height: 17px; padding-left: 104px; gap: 4px; margin-bottom: 16px; line-height: 13px; }
.check { width: 16px; height: 16px; border: 1px solid #b8b0a8; border-radius: 2px; }
.text { width: 322px; height: 34px; padding-left: 6px; line-height: 33px; border: 1px solid #ccc; border-radius: 4px; color: #aaa; }
.tray footer { height: 36px; padding: 6px; border-bottom: 0; }
.enabled { display: flex; align-items: center; gap: 8px; width: 89px; height: 26px; padding-left: 8px; border: 1px solid #ccc; border-radius: 2px; background: #eee; font-size: 13px; color: #777; }
.sep { background: #f2f2f2; }

/* sidebar */
.sidebar { display: flex; flex-direction: column; width: 315px; border: 1px solid #bbb; border-width: 1px 1px 0; background: #f2f2f2; }
.side-tabs { display: flex; height: 35px; padding: 3px 0 0 3px; background: #fff; border-bottom: 1px solid #bbb; }
.debug-tab { display: flex; align-items: center; gap: 5px; width: 133px; height: 32px; padding: 0 0 2px 12px; margin-right: 4px; font-weight: bold; color: #777; border: 1px solid #bbb; border-bottom: 0; background: #fff; }
.more { margin: 13px 0 0 16px; color: #888; }
.side-tools { display: flex; justify-content: flex-end; gap: 10px; height: 43px; padding: 8px 20px 0 0; border-bottom: 1px solid #ddd; }
.btn { display: flex; align-items: center; gap: 4px; width: 60px; height: 26px; padding: 0 5px 0 8px; background: #fff; border: 1px solid #ccc; font-size: 13px; color: #888; }
.all-nodes { width: 97px; }
.btn svg:last-child { margin-left: auto; }
.side-body { height: 680px; background: #fff; border-right: 14px solid #cbcbcb; }
.sidebar footer { height: 27px; padding: 4px 6px 0; display: flex; justify-content: flex-end; }
.sidebar footer span { display: flex; align-items: center; justify-content: center; width: 19px; height: 19px; background: #fff; border: 1px solid #ccc; }

.vbstatus { display: flex; align-items: center; justify-content: flex-end; gap: 2px; height: 19px; padding-right: 2px; font: 10px "Noto Sans", sans-serif; color: #111; }
.vbstatus span { width: 62px; letter-spacing: -.75px; white-space: nowrap; }

/* host taskbar */
.taskbar { display: flex; align-items: stretch; height: 50px; background: #1d1d1d; color: #eee; font-family: "Open Sans", sans-serif; }
.taskbar > span { display: flex; align-items: center; justify-content: center; width: 60px; }
.find { display: flex; align-items: center; width: 430px; padding-left: 15px; background: #f1f1f1; border: 1px solid #bbb; color: #333; font-size: 18px; }
.find span { margin-left: 14px; }
.apps { display: grid; grid-template-columns: repeat(15, 49.200px); margin-left: 5px; }
.apps > span { position: relative; display: flex; align-items: center; justify-content: center; }
.run::after { content: ""; position: absolute; left: 5px; bottom: 0; width: 39px; height: 3px; background: #b5707a; }
.multi::after { background: linear-gradient(90deg, #b5707a 28px, #8a4f5a 28px); }
.ofc { font: bold 13px "Open Sans", sans-serif; fill: #fff; }
.tia { font: 600 16px "Open Sans", sans-serif; fill: #fff; }
.blue { fill: #99a8e0; }
.trayicons { display: grid; align-items: center; justify-items: center; margin-left: 27px; width: 540px;
  grid-template-columns: 38px 49px 57px 24px 55px 25px 55px 34px 61px 67px 75px; }
.temp { font-size: 17px; }
.esp { font-size: 13.500px; }
.time { display: flex; flex-direction: column; align-items: center; font-size: 14.200px; line-height: 22.500px; white-space: nowrap; }
.notif { justify-self: start; margin: 8px 0 0 24px; }
```
